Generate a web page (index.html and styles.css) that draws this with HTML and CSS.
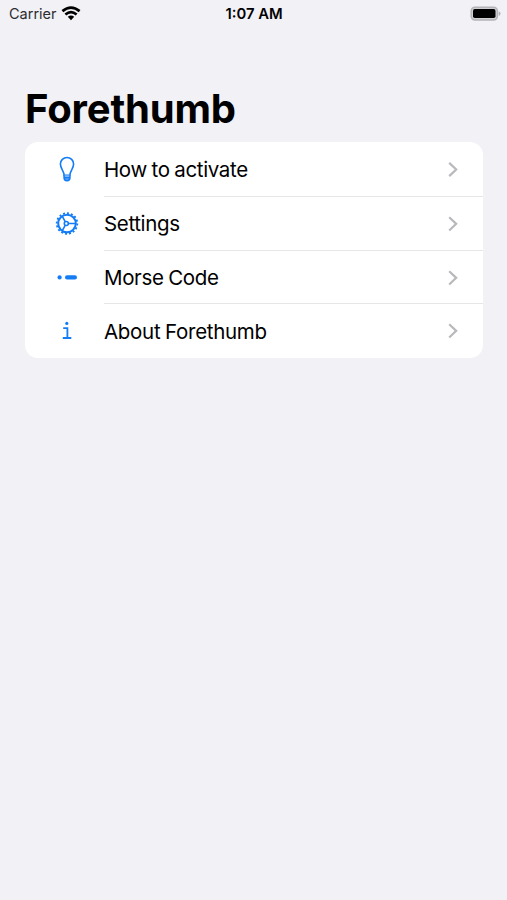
FILE: index.html
```html
<!DOCTYPE html>
<html lang="en">
<head>
<meta charset="utf-8">
<title>Forethumb</title>
<link rel="stylesheet" href="styles.css">
</head>
<body>
<header class="status">
  <div class="carrier">
    <span>Carrier</span>
    <svg class="wifi" width="20" height="16" viewBox="0 0 20 16">
      <path d="M1.4 5.1Q10 -1.9 18.6 5.1M4.4 8.5Q10 3.9 15.6 8.5" fill="none" stroke="#000" stroke-width="2.7"/>
      <path d="M6.8 10.8Q10 8.1 13.2 10.8L10 14.2Z"/>
    </svg>
  </div>
  <time class="time">1:07 AM</time>
  <svg class="battery" width="31" height="16" viewBox="0 0 31 16">
    <rect x="1.2" y="1.2" width="26.2" height="12.8" rx="3.8" fill="#d0d0d4" stroke="#b4b4b8" stroke-width="1.5"/>
    <rect x="3" y="3.1" width="22.5" height="9" rx="1.8"/>
    <path d="M28.7 5.3Q30.5 6 30.5 7.6T28.7 9.9Z" fill="#b0b0b4"/>
  </svg>
</header>
<main>
  <h1 class="title">Forethumb</h1>
  <nav class="list">
    <a class="row">
      <svg class="icon" width="26" height="28" viewBox="0 0 26 28">
        <path d="M10.1 19.3C10.1 14.8 6.4 12.8 6.4 8.1A6.6 6.6 0 0 1 19.6 8.1C19.6 12.8 15.9 14.8 15.9 19.3Z"/>
        <path class="base" d="M10.1 19.3V21.8Q10.1 24.6 13 24.6T15.9 21.8V19.3M10.1 21.7H15.9"/>
      </svg>
      <span class="label">How to activate</span>
      <svg class="chevron" width="12" height="18" viewBox="0 0 12 18"><path d="M2.2 2.4L9.2 9L2.2 15.6"/></svg>
    </a>
    <a class="row">
      <svg class="icon" width="26" height="28" viewBox="0 0 26 28">
        <circle class="teeth" cx="13" cy="13.5" r="10.3" pathLength="160"/>
        <circle class="rim" cx="13" cy="13.5" r="8.8"/>
        <circle cx="12.3" cy="13.5" r="2"/>
        <path d="M14.3 13.5H21.8M11.3 11.8L8.2 6.1M11.3 15.2L8.2 20.9"/>
      </svg>
      <span class="label">Settings</span>
      <svg class="chevron" width="12" height="18" viewBox="0 0 12 18"><path d="M2.2 2.4L9.2 9L2.2 15.6"/></svg>
    </a>
    <a class="row">
      <svg class="icon solid" width="26" height="28" viewBox="0 0 26 28">
        <circle cx="5.6" cy="13.4" r="2.1"/>
        <rect x="11" y="11.3" width="12" height="4.2" rx="2.1"/>
      </svg>
      <span class="label">Morse Code</span>
      <svg class="chevron" width="12" height="18" viewBox="0 0 12 18"><path d="M2.2 2.4L9.2 9L2.2 15.6"/></svg>
    </a>
    <a class="row">
      <svg class="icon" width="26" height="28" viewBox="0 0 26 28">
        <circle class="dot" cx="12.8" cy="6.4" r="1.6"/>
        <path class="stem" d="M9.2 11.1H13.4V21M8.8 21H17.3"/>
      </svg>
      <span class="label">About Forethumb</span>
      <svg class="chevron" width="12" height="18" viewBox="0 0 12 18"><path d="M2.2 2.4L9.2 9L2.2 15.6"/></svg>
    </a>
  </nav>
</main>
</body>
</html>
```
FILE: styles.css
```css
* {
  box-sizing: border-box;
}

body {
  margin: 0;
  min-height: 100vh;
  background: #f1f1f6;
  color: #000;
  font-family: Inter, "Liberation Sans", sans-serif;
}

.status {
  display: grid;
  grid-template-columns: 1fr auto 1fr;
  align-items: center;
  height: 27px;
  padding: 0 6px 0 9px;
  font-size: 14.5px;
}

.carrier {
  display: flex;
  align-items: center;
  gap: 4px;
  color: #2c2c2e;
}

.time {
  margin-right: 2px;
  font-weight: 600;
  font-size: 14.8px;
}

.battery {
  justify-self: end;
}

.title {
  margin: 57px 25px 8px;
  height: 50px;
  font-size: 40px;
  line-height: 50px;
  font-weight: 700;
  letter-spacing: -0.15px;
}

.list {
  margin: 0 24px 0 25px;
  height: 216px;
  display: flex;
  flex-direction: column;
  border-radius: 13px;
  background: #fff;
}

.row {
  flex: 1;
  display: flex;
  align-items: center;
  padding-left: 29px;
}

.row:first-child {
  flex: none;
  height: 55px;
}

.icon {
  flex: none;
  margin-right: 24px;
  fill: none;
  stroke: #147df5;
  stroke-width: 1.6;
}

.icon.solid,
.dot {
  fill: #147df5;
  stroke: none;
}

.teeth {
  stroke-width: 1.8;
  stroke-dasharray: 5 5;
}

.rim {
  stroke-width: 2;
}

.base {
  fill: #7db6fa;
}

.stem {
  stroke-width: 1.8;
}

.label {
  flex: 1;
  align-self: stretch;
  display: flex;
  align-items: center;
  padding-top: 0.5px;
  font-size: 20.5px;
  letter-spacing: -0.36px;
  word-spacing: -0.7px;
  border-bottom: 1px solid #e6e6e8;
}

.row:last-child .label {
  padding-top: 2px;
  letter-spacing: -0.3px;
}

.chevron {
  flex: none;
  align-self: stretch;
  width: 37px;
  height: auto;
  padding: 1px 24px 0 1px;
  border-bottom: 1px solid #e6e6e8;
  fill: none;
  stroke: #b9b9bd;
  stroke-width: 2.2;
}

.row:last-child > * {
  border-bottom-color: transparent;
}
```
